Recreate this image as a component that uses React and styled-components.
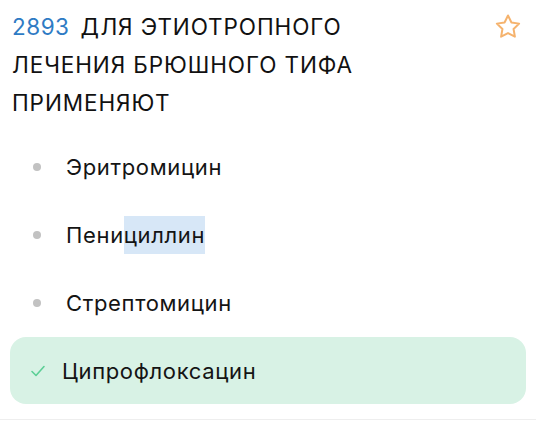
import React from "react";
import styled, { createGlobalStyle } from "styled-components";

const Global = createGlobalStyle`
  html, body { margin: 0; padding: 0; background: #fff; }
  body { font-family: Inter, "Noto Sans", sans-serif; color: #111; }
`;

const Card = styled.div`
  width: 536px;
  height: 420px;
  box-sizing: border-box;
  padding: 8px 10px 0 10px;
  background: #fff;
  border-bottom: 1px solid #eeeeee;
`;

const Header = styled.div`
  display: flex;
  align-items: flex-start;
  justify-content: space-between;
  padding-left: 2px;
`;

const Title = styled.div`
  font-size: 22.5px;
  line-height: 38px;
  font-weight: 400;
  letter-spacing: 0.9px;
  color: #111;
  max-width: 420px;
`;

const Num = styled.span`
  color: #2e7bc4;
  margin-right: 11px;
  letter-spacing: 0.5px;
`;

const StarBtn = styled.div`
  width: 32px;
  height: 32px;
  margin-top: 3px;
  margin-right: 2px;
  display: flex;
  align-items: center;
  justify-content: center;
`;

const List = styled.div`
  display: flex;
  flex-direction: column;
  margin-top: 11px;
`;

const Row = styled.div`
  display: flex;
  align-items: center;
  height: ${p => (p.$correct ? "67px" : "68px")};
  border-radius: 16px;
  background: ${p => (p.$correct ? "#d8f2e5" : "transparent")};
  padding-left: ${p => (p.$correct ? "20px" : "23px")};
`;

const Marker = styled.div`
  width: ${p => (p.$correct ? "16px" : "8px")};
  margin-right: ${p => (p.$correct ? "16px" : "25px")};
  display: flex;
  align-items: center;
  justify-content: center;
`;

const Dot = styled.div`
  width: 8px;
  height: 8px;
  border-radius: 50%;
  background: #c2c2c2;
`;

const Label = styled.span`
  font-size: 22px;
  color: #141414;
  letter-spacing: 0.65px;
`;

const Highlight = styled.span`
  background: #d7e7f7;
  padding: 6px 0;
`;

const Star = () => (
  <svg width="30" height="30" viewBox="0 0 24 24" fill="none" stroke="#f5b36e" strokeWidth="1.6" strokeLinejoin="round">
    <path d="M12 2.8l2.75 5.6 6.15.9-4.45 4.33 1.05 6.12L12 16.86l-5.5 2.89 1.05-6.12L3.1 9.3l6.15-.9z" />
  </svg>
);

const Check = () => (
  <svg width="16" height="12" viewBox="0 0 16 12" fill="none" stroke="#5ccf96" strokeWidth="1.6" strokeLinecap="round" strokeLinejoin="round">
    <path d="M2 6.5l4 4 8-9" />
  </svg>
);

export default function App() {
  return (
    <Card>
      <Global />
      <Header>
        <Title>
          <Num>2893</Num>ДЛЯ ЭТИОТРОПНОГО ЛЕЧЕНИЯ БРЮШНОГО ТИФА ПРИМЕНЯЮТ
        </Title>
        <StarBtn><Star /></StarBtn>
      </Header>
      <List>
        <Row>
          <Marker><Dot /></Marker>
          <Label>Эритромицин</Label>
        </Row>
        <Row>
          <Marker><Dot /></Marker>
          <Label>Пени<Highlight>циллин</Highlight></Label>
        </Row>
        <Row>
          <Marker><Dot /></Marker>
          <Label>Стрептомицин</Label>
        </Row>
        <Row $correct>
          <Marker $correct><Check /></Marker>
          <Label>Ципрофлоксацин</Label>
        </Row>
      </List>
    </Card>
  );
}
